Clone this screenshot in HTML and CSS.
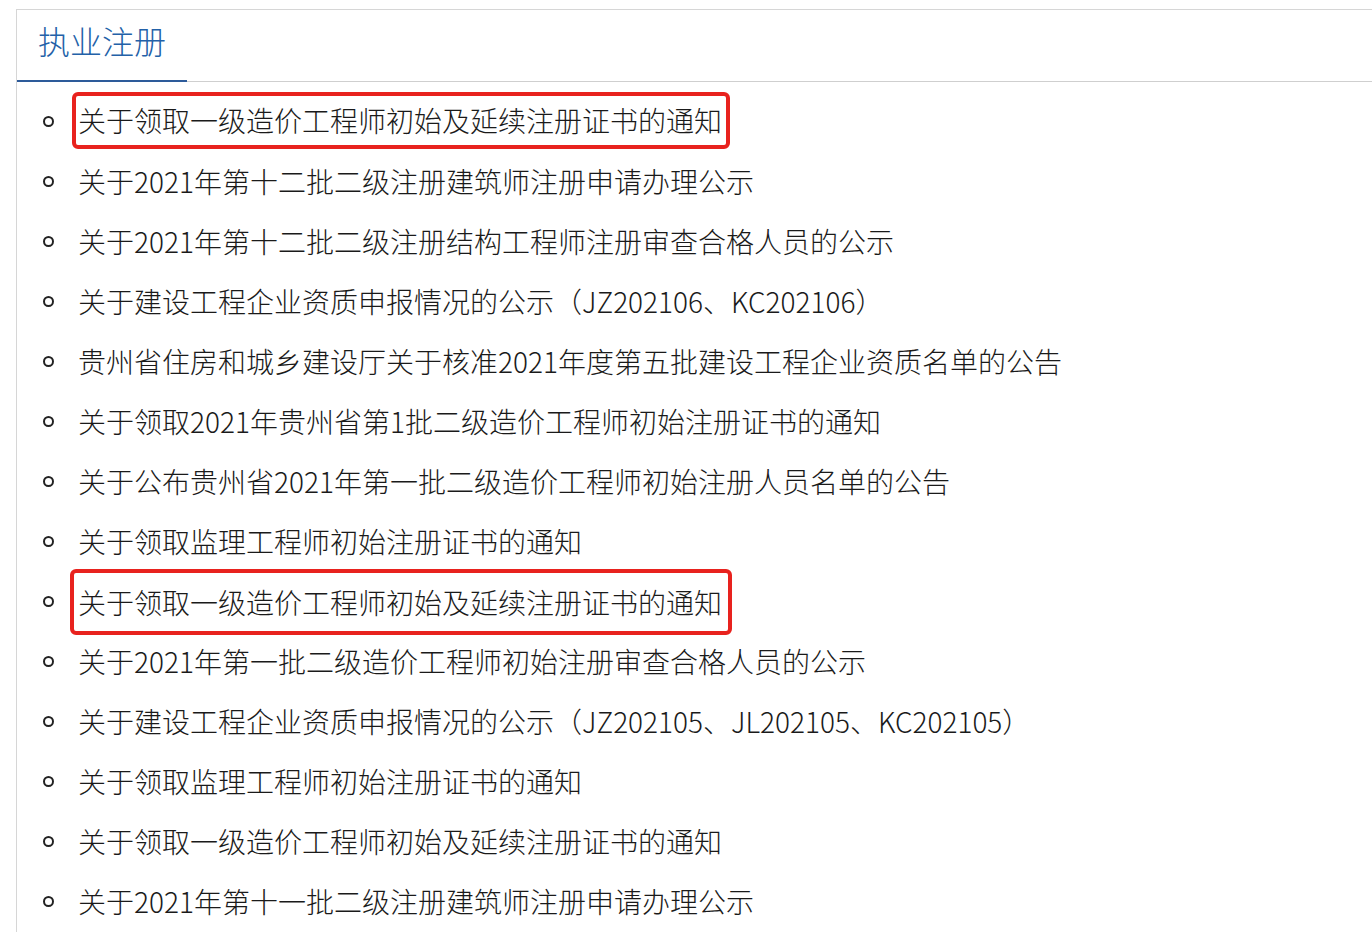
FILE: index.html
```html
<!DOCTYPE html>
<html lang="zh-CN">
<head>
<meta charset="utf-8">
<title>执业注册</title>
<link rel="stylesheet" href="styles.css">
</head>
<body>
<div class="panel">
  <div class="header">
    <div class="tab">执业注册</div>
    <div class="filler"></div>
  </div>
  <ul class="list">
    <li><span class="dot"></span><span class="hl">关于领取一级造价工程师初始及延续注册证书的通知</span></li>
    <li><span class="dot"></span><span>关于2021年第十二批二级注册建筑师注册申请办理公示</span></li>
    <li><span class="dot"></span><span>关于2021年第十二批二级注册结构工程师注册审查合格人员的公示</span></li>
    <li><span class="dot"></span><span>关于建设工程企业资质申报情况的公示（JZ202106、KC202106）</span></li>
    <li><span class="dot"></span><span>贵州省住房和城乡建设厅关于核准2021年度第五批建设工程企业资质名单的公告</span></li>
    <li><span class="dot"></span><span>关于领取2021年贵州省第1批二级造价工程师初始注册证书的通知</span></li>
    <li><span class="dot"></span><span>关于公布贵州省2021年第一批二级造价工程师初始注册人员名单的公告</span></li>
    <li><span class="dot"></span><span>关于领取监理工程师初始注册证书的通知</span></li>
    <li><span class="dot"></span><span class="hl hl-wide">关于领取一级造价工程师初始及延续注册证书的通知</span></li>
    <li><span class="dot"></span><span>关于2021年第一批二级造价工程师初始注册审查合格人员的公示</span></li>
    <li><span class="dot"></span><span>关于建设工程企业资质申报情况的公示（JZ202105、JL202105、KC202105）</span></li>
    <li><span class="dot"></span><span>关于领取监理工程师初始注册证书的通知</span></li>
    <li><span class="dot"></span><span>关于领取一级造价工程师初始及延续注册证书的通知</span></li>
    <li><span class="dot"></span><span>关于2021年第十一批二级注册建筑师注册申请办理公示</span></li>
  </ul>
</div>
</body>
</html>
```
FILE: styles.css
```css
html, body {
  margin: 0;
  padding: 0;
  background: #ffffff;
}
body {
  font-family: "Noto Sans CJK SC", "Noto Sans", sans-serif;
  font-weight: 300;
  color: #1a1a1a;
  padding: 9px 0 0 16px;
  height: 932px;
  box-sizing: border-box;
  overflow: hidden;
}
.panel {
  border-left: 1px solid #d6d6d6;
  border-top: 1px solid #d6d6d6;
  height: 100%;
}
.header {
  display: flex;
  align-items: flex-end;
  height: 72px;
}
.tab {
  box-sizing: border-box;
  width: 170px;
  height: 72px;
  padding-left: 21px;
  font-size: 32px;
  line-height: 60px;
  color: #2361a8;
  border-bottom: 2px solid #2d5b9a;
}
.filler {
  flex: 1;
  border-bottom: 1px solid #cfcfcf;
  height: 0;
}
.list {
  list-style: none;
  margin: 0;
  padding: 9px 0 0 0;
}
.list li {
  display: flex;
  align-items: center;
  height: 60px;
  font-size: 28px;
  white-space: nowrap;
}
.dot {
  box-sizing: border-box;
  width: 11px;
  height: 11px;
  border: 2.5px solid #222;
  border-radius: 50%;
  margin-left: 26px;
  margin-right: 24px;
  flex: none;
}
.hl {
  display: inline-block;
  box-sizing: border-box;
  height: 57px;
  line-height: 49px;
  border: 4px solid #e8221e;
  border-radius: 6px;
  margin-left: -6px;
  padding: 0 4px 0 2px;
  position: relative;
  top: -1px;
}
.hl-wide {
  height: 66px;
  line-height: 58px;
  margin-left: -8px;
  padding: 0 6px 0 4px;
  top: 1px;
}
```
